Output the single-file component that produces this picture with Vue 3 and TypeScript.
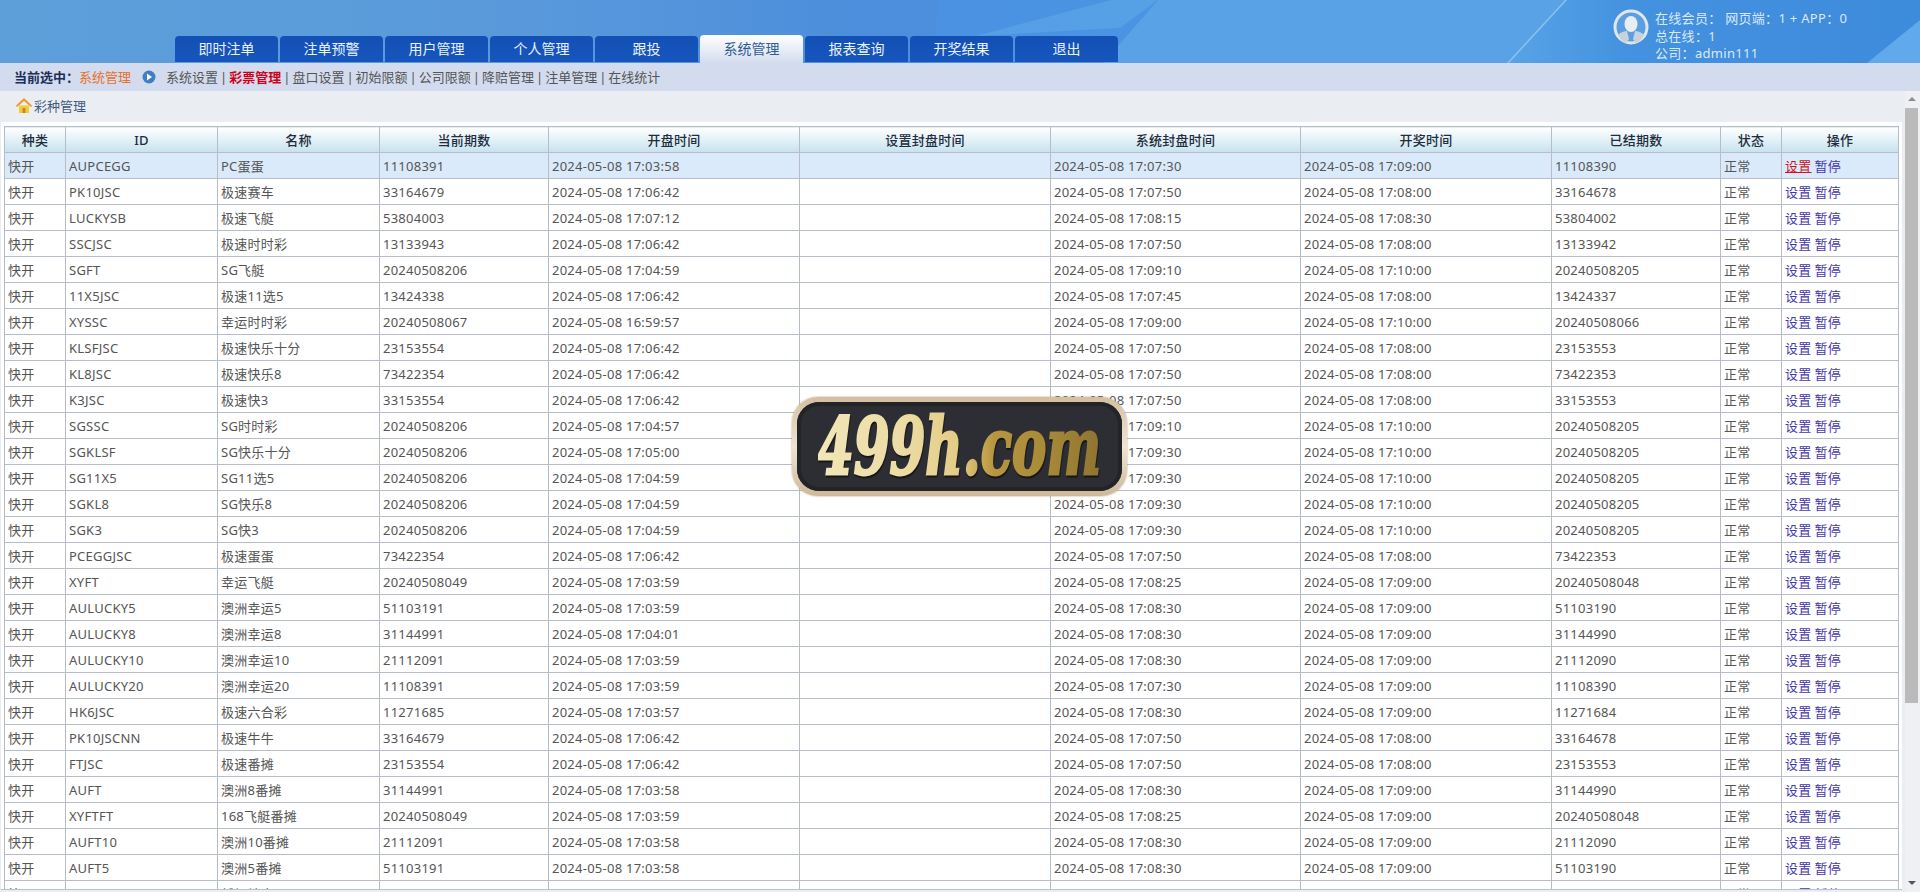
<script setup lang="ts">
const tabs = ["即时注单", "注单预警", "用户管理", "个人管理", "跟投", "系统管理", "报表查询", "开奖结果", "退出"];
const subLinks = ["系统设置", "彩票管理", "盘口设置", "初始限额", "公司限额", "降赔管理", "注单管理", "在线统计"];
const columns = ["种类", "ID", "名称", "当前期数", "开盘时间", "设置封盘时间", "系统封盘时间", "开奖时间", "已结期数", "状态", "操作"];

const d = "2024-05-08 ";
const raw = `AUPCEGG|PC蛋蛋|11108391|17:03:58|17:07:30|17:09:00|11108390
PK10JSC|极速赛车|33164679|17:06:42|17:07:50|17:08:00|33164678
LUCKYSB|极速飞艇|53804003|17:07:12|17:08:15|17:08:30|53804002
SSCJSC|极速时时彩|13133943|17:06:42|17:07:50|17:08:00|13133942
SGFT|SG飞艇|20240508206|17:04:59|17:09:10|17:10:00|20240508205
11X5JSC|极速11选5|13424338|17:06:42|17:07:45|17:08:00|13424337
XYSSC|幸运时时彩|20240508067|16:59:57|17:09:00|17:10:00|20240508066
KLSFJSC|极速快乐十分|23153554|17:06:42|17:07:50|17:08:00|23153553
KL8JSC|极速快乐8|73422354|17:06:42|17:07:50|17:08:00|73422353
K3JSC|极速快3|33153554|17:06:42|17:07:50|17:08:00|33153553
SGSSC|SG时时彩|20240508206|17:04:57|17:09:10|17:10:00|20240508205
SGKLSF|SG快乐十分|20240508206|17:05:00|17:09:30|17:10:00|20240508205
SG11X5|SG11选5|20240508206|17:04:59|17:09:30|17:10:00|20240508205
SGKL8|SG快乐8|20240508206|17:04:59|17:09:30|17:10:00|20240508205
SGK3|SG快3|20240508206|17:04:59|17:09:30|17:10:00|20240508205
PCEGGJSC|极速蛋蛋|73422354|17:06:42|17:07:50|17:08:00|73422353
XYFT|幸运飞艇|20240508049|17:03:59|17:08:25|17:09:00|20240508048
AULUCKY5|澳洲幸运5|51103191|17:03:59|17:08:30|17:09:00|51103190
AULUCKY8|澳洲幸运8|31144991|17:04:01|17:08:30|17:09:00|31144990
AULUCKY10|澳洲幸运10|21112091|17:03:59|17:08:30|17:09:00|21112090
AULUCKY20|澳洲幸运20|11108391|17:03:59|17:07:30|17:09:00|11108390
HK6JSC|极速六合彩|11271685|17:03:57|17:08:30|17:09:00|11271684
PK10JSCNN|极速牛牛|33164679|17:06:42|17:07:50|17:08:00|33164678
FTJSC|极速番摊|23153554|17:06:42|17:07:50|17:08:00|23153553
AUFT|澳洲8番摊|31144991|17:03:58|17:08:30|17:09:00|31144990
XYFTFT|168飞艇番摊|20240508049|17:03:59|17:08:25|17:09:00|20240508048
AUFT10|澳洲10番摊|21112091|17:03:58|17:08:30|17:09:00|21112090
AUFT5|澳洲5番摊|51103191|17:03:58|17:08:30|17:09:00|51103190
SGLUCKY5|新加坡幸运5|240508206|17:03:58|17:07:30|17:09:00|240508205`;

const rows = raw.split("\n").map((line) => {
  const [id, name, cur, open, close, draw, last] = line.split("|");
  return { id, name, cur, open: d + open, close: d + close, draw: d + draw, last };
});
</script>

<template>
  <div class="page">
    <header class="top">
      <svg class="top__art" viewBox="0 0 1920 63" preserveAspectRatio="none" aria-hidden="true">
        <polygon points="939,0 1158,0 1103,63 931,63" fill="#4b97e6" opacity="0.55" />
        <polygon points="1158,0 1565,0 1507,63 1103,63" fill="#59a2e6" />
        <polygon points="1111,0 1158,0 1120,28 976,36" fill="#62abe9" opacity="0.5" />
        <polygon points="1565,0 1567,0 1509,63 1507,63" fill="#8cc2ef" />
        <polygon points="1920,20 1920,63 1867,63" fill="#60a9ea" />
      </svg>
      <nav class="tabs">
        <a
          v-for="(t, i) in tabs"
          :key="t"
          class="tab"
          :class="{ 'tab--on': i === 5 }"
        >{{ t }}</a>
      </nav>
      <div class="user">
        <svg class="user__pic" viewBox="0 0 36 36" aria-hidden="true">
          <circle cx="18" cy="18" r="16" fill="#5b9fe0" stroke="#dfe7ee" stroke-width="3" />
          <ellipse cx="18" cy="15" rx="6.5" ry="8" fill="#e8edf2" />
          <path d="M5 26c3-3 6-4 9-4l2 8-3 4c-3-1-6-4-8-8zM31 26c-3-3-6-4-9-4l-2 8 3 4c3-1 6-4 8-8z" fill="#c9d2da" />
        </svg>
        <div class="user__text">
          <div>在线会员： 网页端：1 + APP：0</div>
          <div>总在线：1</div>
          <div>公司：admin111</div>
        </div>
      </div>
    </header>

    <div class="sub">
      <b class="sub__label">当前选中：</b>
      <span class="sub__cur">系统管理</span>
      <svg class="sub__dot" viewBox="0 0 14 14" aria-hidden="true">
        <circle cx="7" cy="7" r="6.5" fill="#3f7fc4" />
        <path d="M5 3.5 10 7 5 10.5z" fill="#fff" />
      </svg>
      <span class="sub__links">
        <template v-for="(l, i) in subLinks" :key="l">
          <span v-if="i > 0" class="sub__sep">|</span>
          <a :class="{ 'sub__link--on': i === 1 }">{{ l }}</a>
        </template>
      </span>
    </div>

    <main class="main">
      <div class="content">
        <div class="crumb">
          <svg class="crumb__ico" viewBox="0 0 18 16" aria-hidden="true">
            <path d="M4 8h10v7.500H4z" fill="#f5c93a" />
            <path d="M7.500 10.500h3V15.500h-3z" fill="#c98a1c" />
            <path d="M9 .5 .8 8.200l1.400 1.300L9 3.400l6.800 6.100 1.400-1.300z" fill="#ef9a2e" />
          </svg>
          彩种管理
        </div>
        <div class="panel">
          <table class="grid">
            <colgroup>
              <col style="width: 61px" />
              <col style="width: 152px" />
              <col style="width: 162px" />
              <col style="width: 169px" />
              <col style="width: 251px" />
              <col style="width: 251px" />
              <col style="width: 250px" />
              <col style="width: 251px" />
              <col style="width: 169px" />
              <col style="width: 61px" />
              <col />
            </colgroup>
            <thead>
              <tr>
                <th v-for="c in columns" :key="c">{{ c }}</th>
              </tr>
            </thead>
            <tbody>
              <tr v-for="(r, i) in rows" :key="r.id" :class="{ on: i === 0 }">
                <td>快开</td>
                <td>{{ r.id }}</td>
                <td>{{ r.name }}</td>
                <td>{{ r.cur }}</td>
                <td>{{ r.open }}</td>
                <td></td>
                <td>{{ r.close }}</td>
                <td>{{ r.draw }}</td>
                <td>{{ r.last }}</td>
                <td>正常</td>
                <td class="ops">
                  <a :class="{ hot: i === 0 }">设置</a>
                  <a class="ops__next">暂停</a>
                </td>
              </tr>
            </tbody>
          </table>
        </div>
      </div>
      <div class="bar">
        <i class="bar__up"></i>
        <div class="bar__thumb"></div>
        <i class="bar__down"></i>
      </div>
    </main>

    <div class="badge">
      <div class="badge__inner">
        <span class="badge__text">499h.com</span>
      </div>
    </div>
  </div>
</template>

<style scoped>
.page {
  position: relative;
  display: flex;
  flex-direction: column;
  height: 892px;
  overflow: hidden;
  font-family: "Noto Sans", "Noto Sans CJK SC", sans-serif;
  font-size: 13px;
  color: #555;
}
.top {
  position: relative;
  flex: none;
  height: 63px;
  display: flex;
  justify-content: space-between;
  overflow: hidden;
  background: linear-gradient(90deg, #5c9fd9 0%, #5a9adb 25%, #4d8edc 45%, #4a90e0 60%, #5aa5e8 78%, #4391df 85%, #3d8bdb 100%);
}
.top__art {
  position: absolute;
  inset: 0;
  width: 100%;
  height: 100%;
}
.tabs {
  position: relative;
  display: flex;
  align-items: flex-end;
  gap: 2px;
  padding-left: 175px;
}
.tab {
  width: 103px;
  height: 26px;
  margin-bottom: 1px;
  border-radius: 4px 4px 0 0;
  background: linear-gradient(#1350b6, #1656bc);
  color: #eaf2fb;
  font-size: 14px;
  line-height: 26px;
  text-align: center;
}
.tab--on {
  height: 28px;
  margin-bottom: 0;
  background: linear-gradient(#fff, #d3dcee);
  color: #2f5d92;
  line-height: 28px;
}
.user {
  position: relative;
  display: flex;
  gap: 6px;
  width: 307px;
  padding-top: 9px;
}
.user__pic {
  flex: none;
  width: 36px;
  height: 36px;
}
.user__text {
  margin-top: 1px;
  color: #dbe9f7;
  letter-spacing: 0.3px;
  line-height: 17.500px;
  white-space: nowrap;
}
.sub {
  flex: none;
  height: 28px;
  display: flex;
  align-items: center;
  padding-left: 14px;
  background: #d3dcee;
  line-height: 28px;
  white-space: nowrap;
}
.sub__label {
  width: 65px;
  color: #1b2d59;
}
.sub__cur {
  width: 63px;
  color: #e8701f;
}
.sub__dot {
  width: 14px;
  height: 14px;
  margin-right: 10px;
}
.sub__sep {
  margin: 0 2px;
}
.sub__link--on {
  color: #d0021b;
  font-weight: 700;
}
.main {
  flex: 1;
  display: flex;
  min-height: 0;
  background: #eaeef2;
}
.content {
  flex: 1;
  min-width: 0;
  display: flex;
  flex-direction: column;
  padding-bottom: 2px;
}
.crumb {
  flex: none;
  height: 29px;
  padding-bottom: 2px;
  display: flex;
  align-items: center;
  gap: 1px;
  padding-left: 15px;
  color: #3e5a80;
}
.crumb__ico {
  width: 18px;
  height: 17px;
}
.panel {
  flex: 1;
  min-height: 0;
  overflow: hidden;
  margin: 0 3px 0 1px;
  padding: 4px 3px 0;
  background: #fff;
  border-bottom: 1px solid #b9c2d2;
}
.grid {
  width: 1895px;
  table-layout: fixed;
  border-collapse: collapse;
  letter-spacing: 0.25px;
}
.grid th,
.grid td {
  height: 26px;
  box-sizing: border-box;
  padding: 0 3px;
  border: 1px solid #b7bdc6;
  line-height: 24px;
  white-space: nowrap;
  overflow: hidden;
}
.grid th {
  background: linear-gradient(#fff, #c6e2ef);
  color: #222c3c;
  font-weight: 500;
  text-align: center;
}
.grid tr.on td {
  background: #dbeafb;
}
.ops a {
  color: #4338ad;
}
.ops a.hot {
  color: #d0121f;
  text-decoration: underline;
}
.ops__next {
  margin-left: 3px;
}
.bar {
  flex: none;
  width: 15px;
  display: flex;
  flex-direction: column;
  align-items: flex-start;
  background: #eef0f3;
}
.bar__up,
.bar__down {
  width: 0;
  height: 0;
  margin-left: 3px;
  border-left: 4px solid transparent;
  border-right: 4px solid transparent;
}
.bar__up {
  margin-top: 6px;
  border-bottom: 4px solid #8c8c8c;
}
.bar__thumb {
  width: 13px;
  height: 595px;
  margin-top: 7px;
  background: #bababa;
}
.bar__down {
  margin-top: auto;
  margin-bottom: 7px;
  border-top: 4px solid #555;
}
.badge {
  position: absolute;
  left: 792px;
  top: 397px;
  width: 335px;
  height: 99px;
  box-sizing: border-box;
  padding: 5px;
  border-radius: 26px;
  background: linear-gradient(#d3bfa0, #efe4d2 50%, #cdb899);
  box-shadow: 0 0 2px #a99674;
}
.badge__inner {
  height: 100%;
  display: flex;
  align-items: center;
  justify-content: center;
  overflow: hidden;
  border-radius: 22px;
  background: #2d2e33;
  box-shadow: inset 0 0 0 4px #232428;
}
.badge__text {
  display: inline-block;
  font-family: "DejaVu Serif", serif;
  font-size: 78px;
  font-weight: 700;
  font-style: italic;
  line-height: 1;
  white-space: nowrap;
  transform: scaleX(0.66);
  background: linear-gradient(90deg, #f2e6b8 0%, #ecdca4 30%, #e2cb85 50%, #b8963f 62%, #a88a38 80%, #8d7430 100%);
  -webkit-background-clip: text;
  background-clip: text;
  color: transparent;
  -webkit-text-stroke: 3px transparent;
  filter: drop-shadow(1px 2px 0 #16161a);
}
</style>

<style>
html,
body {
  margin: 0;
  height: 100%;
  overflow: hidden;
}
</style>
